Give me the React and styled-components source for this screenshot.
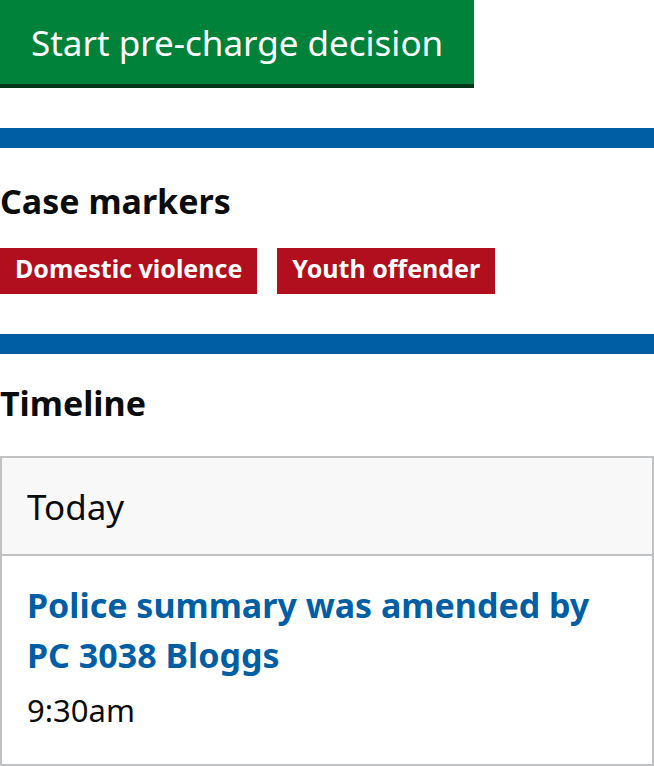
import styled, { createGlobalStyle } from "styled-components";

const GlobalStyle = createGlobalStyle`
  body {
    margin: 0;
    background: #ffffff;
    color: #0b0c0c;
    font-family: "Noto Sans", Arial, sans-serif;
  }
`;

const Page = styled.main`
  width: 654px;
`;

const StartButton = styled.button`
  display: block;
  height: 84px;
  width: 474px;
  padding: 1px 0 0 31px;
  margin: 0 0 44px;
  border: none;
  border-radius: 0;
  background: #00823b;
  box-shadow: 0 4px 0 #003618;
  color: #ffffff;
  font-family: inherit;
  font-size: 35px;
  line-height: 83px;
  text-align: left;
  cursor: pointer;
`;

const Divider = styled.hr`
  height: 20px;
  margin: 0;
  border: none;
  background: #005ea5;
`;

const Heading = styled.h2`
  margin: ${(p) => p.$top}px 0 ${(p) => p.$bottom}px;
  font-size: 34px;
  line-height: 50px;
  font-weight: 700;
`;

const TagList = styled.ul`
  display: flex;
  gap: 20px;
  margin: 0 0 40px;
  padding: 0;
  list-style: none;
`;

const Tag = styled.li`
  height: 40px;
  padding: 0 15px 6px;
  background: #b10e1e;
  color: #ffffff;
  font-size: 25px;
  font-weight: 700;
  line-height: 40px;
`;

const Timeline = styled.section`
  border: 2px solid #bfc1c3;
`;

const DayHeader = styled.h3`
  margin: 0;
  height: 96px;
  padding: 0 25px;
  background: #f8f8f8;
  border-bottom: 2px solid #bfc1c3;
  font-size: 35px;
  font-weight: 400;
  line-height: 97px;
`;

const Event = styled.div`
  padding: 24px 25px 34px;
`;

const EventLink = styled.a`
  display: block;
  color: #005ea5;
  font-size: 34px;
  font-weight: 700;
  line-height: 50px;
  text-decoration: none;
`;

const EventTime = styled.p`
  margin: 10px 0 0;
  font-size: 31px;
  line-height: 40px;
`;

export default function App() {
  return (
    <>
      <GlobalStyle />
      <Page>
        <StartButton type="button">Start pre-charge decision</StartButton>
        <Divider />
        <Heading $top={28} $bottom={22}>
          Case markers
        </Heading>
        <TagList>
          <Tag>Domestic violence</Tag>
          <Tag>Youth offender</Tag>
        </TagList>
        <Divider />
        <Heading $top={24} $bottom={28}>
          Timeline
        </Heading>
        <Timeline>
          <DayHeader>Today</DayHeader>
          <Event>
            <EventLink href="#">
              Police summary was amended by
              <br />
              PC 3038 Bloggs
            </EventLink>
            <EventTime>9:30am</EventTime>
          </Event>
        </Timeline>
      </Page>
    </>
  );
}
